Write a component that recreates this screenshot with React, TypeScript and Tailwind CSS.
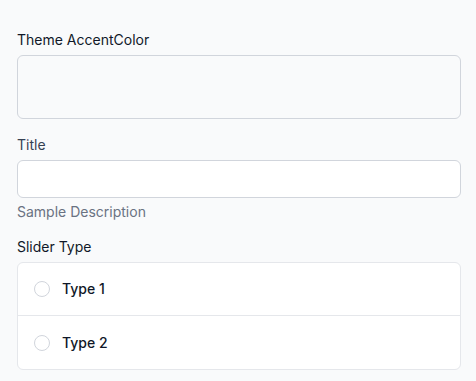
import React from "react";

export default function App() {
  return (
    <div
      className="min-h-[381px] w-full bg-[#f9fafb] pl-[17px] pr-[15px] pt-[30px] text-sm text-gray-900"
      style={{ fontFamily: "Inter, 'Noto Sans', sans-serif" }}
    >
      <div className="flex flex-col">
        <label className="mb-[5px] block leading-5 text-gray-900">Theme AccentColor</label>
        <div className="h-[64px] w-full rounded-md border border-gray-300" />
      </div>

      <div className="mt-4 flex flex-col">
        <label className="mb-[5px] block leading-5 text-gray-700">Title</label>
        <input
          type="text"
          className="h-[38px] w-full rounded-md border border-gray-300 bg-white px-3 text-sm outline-none"
        />
        <p className="mt-1 leading-5 text-gray-500">Sample Description</p>
      </div>

      <div className="mt-[15px] flex flex-col">
        <label className="mb-[5px] block leading-5 text-gray-900">Slider Type</label>
        <div className="w-full divide-y divide-gray-200 rounded-md border border-gray-200 bg-white">
          {["Type 1", "Type 2"].map((t) => (
            <label key={t} className="flex h-[53px] items-center px-4">
              <span className="h-4 w-4 rounded-full border border-gray-300 bg-white" />
              <span className="ml-3 font-medium text-gray-900">{t}</span>
            </label>
          ))}
        </div>
      </div>
    </div>
  );
}
